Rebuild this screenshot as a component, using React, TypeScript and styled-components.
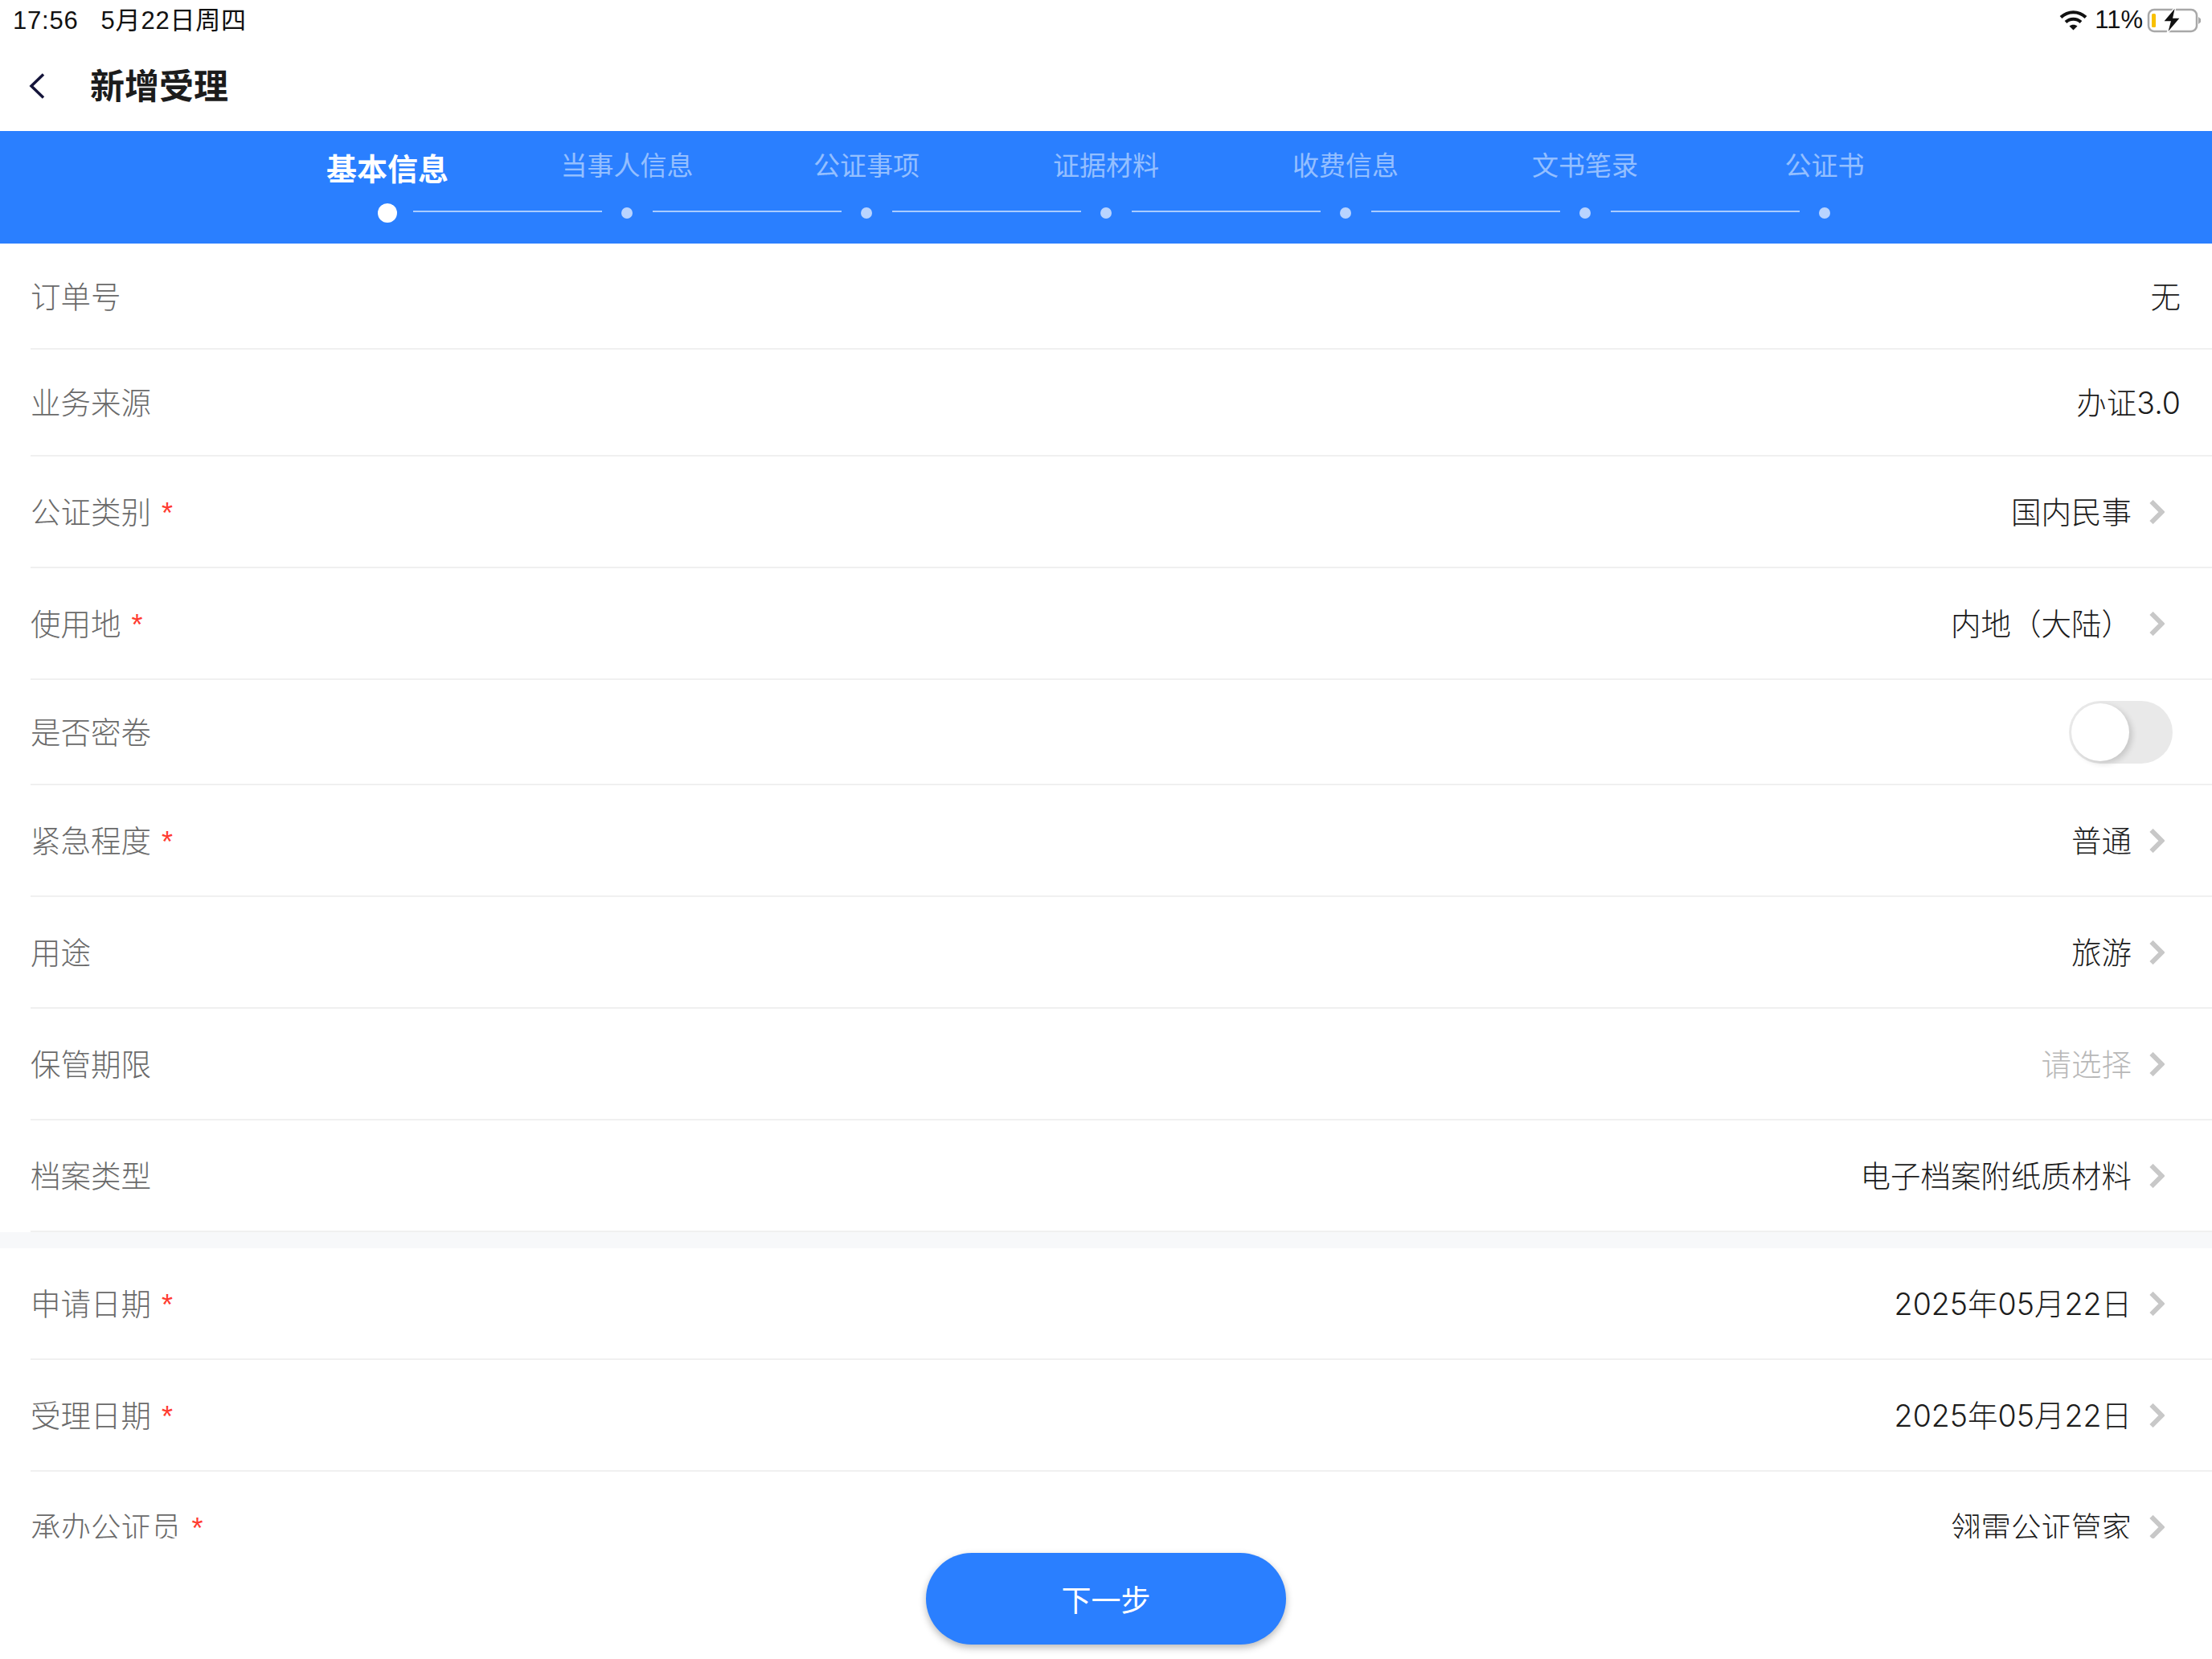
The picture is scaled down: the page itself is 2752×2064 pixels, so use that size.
import { Fragment } from "react";
import styled, { createGlobalStyle } from "styled-components";

const Global = createGlobalStyle`
  html, body {
    margin: 0;
    padding: 0;
    background: #fff;
  }
  * {
    box-sizing: border-box;
  }
`;

const Page = styled.div`
  display: flex;
  flex-direction: column;
  width: 2752px;
  height: 2064px;
  overflow: hidden;
  background: #fff;
  font-family: Inter, "Noto Sans CJK SC", sans-serif;
`;

const StatusBar = styled.div`
  display: flex;
  align-items: center;
  justify-content: space-between;
  height: 50px;
  padding: 0 13px 0 16px;
  color: #111;
  font-family: "Liberation Sans", "Noto Sans CJK SC", sans-serif;
  font-size: 31px;
`;
const StatusLeft = styled.div`
  display: flex;
  align-items: baseline;
  gap: 28px;
  margin-bottom: 6px;
  letter-spacing: 0.8px;
`;
const StatusRight = styled.div`
  display: flex;
  align-items: center;
`;
const Percent = styled.span`
  margin: 0 5px 0 9.5px;
  font-size: 31px;
`;

const Header = styled.div`
  display: flex;
  align-items: center;
  height: 113px;
  padding: 0 0 0 36px;
`;
const Title = styled.div`
  margin-left: 56px;
  color: #1c1c1c;
  font-size: 43px;
  font-weight: 700;
  line-height: 60px;
`;

const Stepper = styled.div`
  display: flex;
  flex-direction: column;
  align-items: center;
  height: 140px;
  padding-top: 17px;
  background: #2a7fff;
`;
const Steps = styled.div`
  display: grid;
  grid-template-columns: repeat(7, 298px);
  align-items: start;
  height: 73px;
`;
const StepLabel = styled.div<{ $active?: boolean }>`
  text-align: center;
  white-space: nowrap;
  color: ${(p) => (p.$active ? "#fff" : "rgba(255, 255, 255, 0.5)")};
  font-size: ${(p) => (p.$active ? "38px" : "33px")};
  font-weight: ${(p) => (p.$active ? 700 : 400)};
`;
const Track = styled.div`
  display: flex;
  align-items: center;
  height: 24px;
`;
const DotSlot = styled.div`
  display: flex;
  align-items: center;
  justify-content: center;
  width: 63px;
`;
const Dot = styled.div<{ $active?: boolean }>`
  width: ${(p) => (p.$active ? "24px" : "14px")};
  height: ${(p) => (p.$active ? "24px" : "14px")};
  border-radius: 50%;
  background: ${(p) => (p.$active ? "#fff" : "#b9d4ff")};
`;
const Line = styled.div`
  width: 235px;
  height: 2px;
  margin-bottom: 4px;
  background: rgba(255, 255, 255, 0.6);
`;

const Form = styled.div`
  flex: 1;
  min-height: 0;
  overflow: hidden;
`;
const Row = styled.div<{ $h: number }>`
  display: flex;
  align-items: center;
  justify-content: space-between;
  height: ${(p) => p.$h}px;
  margin-left: 38px;
  padding-right: 39px;
  border-bottom: 2px solid #f0f0f0;
  font-size: 37.5px;
  font-weight: 300;
`;
const Label = styled.div`
  margin-bottom: 4px;
  color: #6a6a6a;
`;
const Star = styled.span`
  margin-left: 13px;
  color: #ff3b30;
  font-family: "Liberation Sans", sans-serif;
  font-size: 36px;
`;
const Right = styled.div`
  display: flex;
  align-items: center;
  gap: 22px;
`;
const Value = styled.div<{ $empty?: boolean }>`
  margin-bottom: 4px;
  color: ${(p) => (p.$empty ? "#b8b8b8" : "#1c1c1c")};
`;
const Arrow = styled.svg`
  display: block;
  margin-right: 20px;
`;
const Band = styled.div`
  height: 20px;
  background: #f7f8fa;
`;

const Toggle = styled.div`
  display: flex;
  align-items: center;
  width: 129px;
  height: 78px;
  margin-right: 10px;
  padding-left: 3px;
  border-radius: 39px;
  background: #e9e9e9;
`;
const Knob = styled.div`
  width: 72px;
  height: 72px;
  border-radius: 50%;
  background: #fff;
  box-shadow: 4px 3px 7px rgba(0, 0, 0, 0.14);
`;

const Footer = styled.div`
  display: flex;
  justify-content: center;
  height: 150px;
  padding-top: 18px;
  background: #fff;
`;
const NextButton = styled.button`
  width: 448px;
  height: 114px;
  border: 0;
  border-radius: 57px;
  background: #2a7fff;
  color: #fff;
  font-family: inherit;
  font-size: 37px;
  box-shadow: 0 4px 10px rgba(0, 0, 0, 0.28);
`;

const steps = ["基本信息", "当事人信息", "公证事项", "证据材料", "收费信息", "文书笔录", "公证书"];

type Item = { label: string; h: number; value?: string; required?: boolean; select?: boolean; empty?: boolean; toggle?: boolean };

const first: Item[] = [
  { label: "订单号", h: 132, value: "无" },
  { label: "业务来源", h: 133, value: "办证3.0" },
  { label: "公证类别", h: 139, value: "国内民事", required: true, select: true },
  { label: "使用地", h: 139, value: "内地（大陆）", required: true, select: true },
  { label: "是否密卷", h: 131, toggle: true },
  { label: "紧急程度", h: 139, value: "普通", required: true, select: true },
  { label: "用途", h: 139, value: "旅游", select: true },
  { label: "保管期限", h: 139, value: "请选择", select: true, empty: true },
  { label: "档案类型", h: 139, value: "电子档案附纸质材料", select: true },
];

const second: Item[] = [
  { label: "申请日期", h: 139, value: "2025年05月22日", required: true, select: true },
  { label: "受理日期", h: 139, value: "2025年05月22日", required: true, select: true },
  { label: "承办公证员", h: 139, value: "翎雷公证管家", required: true, select: true },
];

function Wifi() {
  return (
    <svg width="35" height="26" viewBox="0 0 35 26">
      <path d="M2 9.5C11 1 24 1 33 9.5" fill="none" stroke="#111" strokeWidth="4" />
      <path d="M8 15.5C13.5 10.5 21.5 10.5 27 15.5" fill="none" stroke="#111" strokeWidth="4" />
      <path d="M12.5 20.5C15.5 18 19.5 18 22.5 20.5L17.5 25.5Z" fill="#111" />
    </svg>
  );
}

function Battery() {
  return (
    <svg width="68" height="34" viewBox="0 0 68 34">
      <rect x="2" y="4" width="60" height="27" rx="7" fill="none" stroke="#a8a8a8" strokeWidth="2.5" />
      <rect x="6" y="9" width="5" height="17" rx="1.5" fill="#f8c000" />
      <path d="M36 0L20 19H29L25 34L42 14H33Z" fill="#111" stroke="#fff" strokeWidth="1.5" />
      <path d="M64 13L67 15.5V19.5L64 22Z" fill="#a8a8a8" />
    </svg>
  );
}

function FormRow({ item }: { item: Item }) {
  return (
    <Row $h={item.h}>
      <Label>
        {item.label}
        {item.required && <Star>*</Star>}
      </Label>
      {item.toggle ? (
        <Toggle>
          <Knob />
        </Toggle>
      ) : (
        <Right>
          <Value $empty={item.empty}>{item.value}</Value>
          {item.select && (
            <Arrow width="19" height="30" viewBox="0 0 19 30">
              <path d="M2.5 2L15.5 15L2.5 28" fill="none" stroke="#c8c8c8" strokeWidth="6" />
            </Arrow>
          )}
        </Right>
      )}
    </Row>
  );
}

export default function App() {
  return (
    <Page>
      <Global />
      <StatusBar>
        <StatusLeft>
          <span>17:56</span>
          <span>5月22日周四</span>
        </StatusLeft>
        <StatusRight>
          <Wifi />
          <Percent>11%</Percent>
          <Battery />
        </StatusRight>
      </StatusBar>
      <Header>
        <svg width="20" height="32" viewBox="0 0 20 32">
          <path d="M18 1.5L3 16L18 30.5" fill="none" stroke="#14143a" strokeWidth="3.5" />
        </svg>
        <Title>新增受理</Title>
      </Header>
      <Stepper>
        <Steps>
          {steps.map((s, i) => (
            <StepLabel key={s} $active={i === 0}>
              {s}
            </StepLabel>
          ))}
        </Steps>
        <Track>
          {steps.map((s, i) => (
            <Fragment key={s}>
              <DotSlot>
                <Dot $active={i === 0} />
              </DotSlot>
              {i < steps.length - 1 && <Line />}
            </Fragment>
          ))}
        </Track>
      </Stepper>
      <Form>
        {first.map((item) => (
          <FormRow key={item.label} item={item} />
        ))}
        <Band />
        {second.map((item) => (
          <FormRow key={item.label} item={item} />
        ))}
      </Form>
      <Footer>
        <NextButton>下一步</NextButton>
      </Footer>
    </Page>
  );
}
